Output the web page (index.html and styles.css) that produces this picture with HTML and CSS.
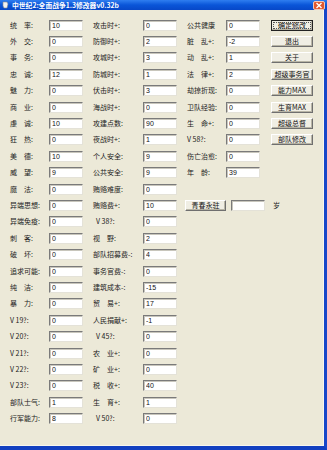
FILE: index.html
```html
<!DOCTYPE html>
<html lang="zh-CN">
<head>
    <meta charset="UTF-8">
    <title>中世纪2:全面战争1.3修改器v0.32b</title>
    <link rel="stylesheet" href="styles.css">
</head>
<body>
    <div class="window">
        <div class="titlebar">
            <svg class="app-icon" width="7" height="8" viewBox="0 0 7 8">
                <path d="M1 1h4l1 2-1 4H2L1 5z" fill="#f2f2f2" stroke="#8a8a8a" stroke-width="0.6"/>
            </svg>
            <span class="title">中世纪2:全面战争1.3修改器v0.32b</span>
            <span class="close">
                <svg width="8" height="7" viewBox="0 0 8 7"><path d="M1.5 1l5 5M6.5 1l-5 5" stroke="#fff" stroke-width="1.4"/></svg>
            </span>
        </div>

        <div class="form">
            <div class="row">
                <label>统　率:</label><input type="text" value="10">
                <label>攻击时+:</label><input type="text" value="0">
                <label>公共健康</label><input type="text" value="0">
                <span class="cell"><button class="btn default">确定修改</button></span>
            </div>
            <div class="row">
                <label>外　交:</label><input type="text" value="0">
                <label>防御时+:</label><input type="text" value="2">
                <label>脏　乱+:</label><input type="text" value="-2">
                <span class="cell"><button class="btn">退出</button></span>
            </div>
            <div class="row">
                <label>事　务:</label><input type="text" value="0">
                <label>攻城时+:</label><input type="text" value="3">
                <label>动　乱+:</label><input type="text" value="1">
                <span class="cell"><button class="btn">关于</button></span>
            </div>
            <div class="row">
                <label>忠　诚:</label><input type="text" value="12">
                <label>防城时+:</label><input type="text" value="1">
                <label>法　律+:</label><input type="text" value="2">
                <span class="cell"><button class="btn">超级事务官</button></span>
            </div>
            <div class="row">
                <label>魅　力:</label><input type="text" value="0">
                <label>伏击时+:</label><input type="text" value="3">
                <label>劫掠折现:</label><input type="text" value="0">
                <span class="cell"><button class="btn">能力MAX</button></span>
            </div>
            <div class="row">
                <label>商　业:</label><input type="text" value="0">
                <label>海战时+:</label><input type="text" value="0">
                <label>卫队经验:</label><input type="text" value="0">
                <span class="cell"><button class="btn">生育MAX</button></span>
            </div>
            <div class="row">
                <label>虔　诚:</label><input type="text" value="10">
                <label>攻建点数:</label><input type="text" value="90">
                <label>生　命+:</label><input type="text" value="0">
                <span class="cell"><button class="btn">超级总督</button></span>
            </div>
            <div class="row">
                <label>狂　热:</label><input type="text" value="0">
                <label>夜战时+:</label><input type="text" value="1">
                <label>V 58?:</label><input type="text" value="0">
                <span class="cell"><button class="btn">部队修改</button></span>
            </div>
            <div class="row">
                <label>美　德:</label><input type="text" value="10">
                <label>个人安全:</label><input type="text" value="9">
                <label>伤亡治愈:</label><input type="text" value="0">
            </div>
            <div class="row">
                <label>威　望:</label><input type="text" value="9">
                <label>公共安全:</label><input type="text" value="9">
                <label>年　龄:</label><input type="text" value="39">
            </div>
            <div class="row">
                <label>魔　法:</label><input type="text" value="0">
                <label>贿赂难度:</label><input type="text" value="0">
            </div>
            <div class="row">
                <label>异端思想:</label><input type="text" value="0">
                <label>贿赂费+:</label><input type="text" value="10">
                <div class="youth">
                    <button class="btn">青春永驻</button>
                    <input type="text" value="">
                    <span>岁</span>
                </div>
            </div>
            <div class="row">
                <label>异端免疫:</label><input type="text" value="0">
                <label class="indent">V 38?:</label><input type="text" value="0">
            </div>
            <div class="row">
                <label>刺　客:</label><input type="text" value="0">
                <label>视　野:</label><input type="text" value="2">
            </div>
            <div class="row">
                <label>破　坏:</label><input type="text" value="0">
                <label>部队招募费-:</label><input type="text" value="4">
            </div>
            <div class="row">
                <label>追求可能:</label><input type="text" value="0">
                <label>事务官费-:</label><input type="text" value="0">
            </div>
            <div class="row">
                <label>纯　洁:</label><input type="text" value="0">
                <label>建筑成本-:</label><input type="text" value="-15">
            </div>
            <div class="row">
                <label>暴　力:</label><input type="text" value="0">
                <label>贸　易+:</label><input type="text" value="17">
            </div>
            <div class="row">
                <label>V 19?:</label><input type="text" value="0">
                <label>人民捐献+:</label><input type="text" value="-1">
            </div>
            <div class="row">
                <label>V 20?:</label><input type="text" value="0">
                <label class="indent">V 45?:</label><input type="text" value="0">
            </div>
            <div class="row">
                <label>V 21?:</label><input type="text" value="0">
                <label>农　业+:</label><input type="text" value="0">
            </div>
            <div class="row">
                <label>V 22?:</label><input type="text" value="0">
                <label>矿　业+:</label><input type="text" value="0">
            </div>
            <div class="row">
                <label>V 23?:</label><input type="text" value="0">
                <label>税　收+:</label><input type="text" value="40">
            </div>
            <div class="row">
                <label>部队士气:</label><input type="text" value="1">
                <label>生　育+:</label><input type="text" value="1">
            </div>
            <div class="row">
                <label>行军能力:</label><input type="text" value="8">
                <label class="indent">V 50?:</label><input type="text" value="0">
            </div>
        </div>
    </div>
</body>
</html>
```

FILE: styles.css
```css
body {
    margin: 0;
    font-family: "Noto Sans CJK SC", "Liberation Sans", sans-serif;
    background: #ece9d8;
}

.window {
    width: 327px;
    height: 450px;
    box-sizing: border-box;
    background: #ece9d8;
    border-right: 3px solid #1747c9;
    border-bottom: 4px solid #1240c0;
    box-shadow: inset -1px -1px 0 #f8f6ee;
    display: flex;
    flex-direction: column;
}

.titlebar {
    height: 10px;
    margin-right: -3px;
    background: linear-gradient(to bottom, #2f7ef0, #0a55d8 50%, #0848c8);
    display: flex;
    align-items: center;
    padding-left: 2px;
    gap: 3px;
}

.title {
    flex: 1;
    color: #fff;
    font-size: 6.8px;
    font-weight: bold;
    white-space: nowrap;
    line-height: 10px;
}

.close {
    width: 12px;
    height: 9px;
    margin-right: 2px;
    background: #e2582f;
    border: 1px solid #f4c7b5;
    border-radius: 2px;
    box-sizing: border-box;
    display: flex;
    align-items: center;
    justify-content: center;
}

.form {
    padding-top: 7px;
}

.row {
    display: grid;
    grid-template-columns: 49px 34px 60px 34px 49px 34px 53px;
    height: 16.4px;
    align-items: center;
}

label {
    padding-left: 10px;
    font-size: 7px;
    color: #222;
    white-space: nowrap;
    line-height: 11px;
}

label.indent {
    padding-left: 13px;
}

input {
    width: 34px;
    height: 11px;
    box-sizing: border-box;
    margin: 0;
    padding: 0 2px;
    font-family: "Liberation Sans", sans-serif;
    font-size: 7px;
    color: #111;
    background: #fff;
    border: 1px solid;
    border-color: #7a7a7a #e4e2d8 #e4e2d8 #7a7a7a;
    box-shadow: inset 1px 1px 0 #c8c6bc;
    outline: none;
}

.cell {
    padding-left: 11px;
    display: flex;
}

.btn {
    width: 42px;
    height: 11px;
    box-sizing: border-box;
    margin: 0;
    padding: 0;
    font-family: "Noto Sans CJK SC", "Liberation Sans", sans-serif;
    font-size: 7px;
    line-height: 9px;
    color: #111;
    background: #f0eee4;
    border: 1px solid;
    border-color: #ffffff #6f6f6f #6f6f6f #ffffff;
    box-shadow: inset -1px -1px 0 #b8b5a6;
}

.btn.default {
    border-color: #222;
    outline: 1px dotted #555;
    outline-offset: -3px;
}

.youth {
    grid-column: 5 / 8;
    display: flex;
    align-items: center;
    padding-left: 8px;
}

.youth .btn {
    width: 41px;
}

.youth input {
    margin-left: 5px;
}

.youth span {
    margin-left: 8px;
    font-size: 7px;
    color: #222;
}
```
